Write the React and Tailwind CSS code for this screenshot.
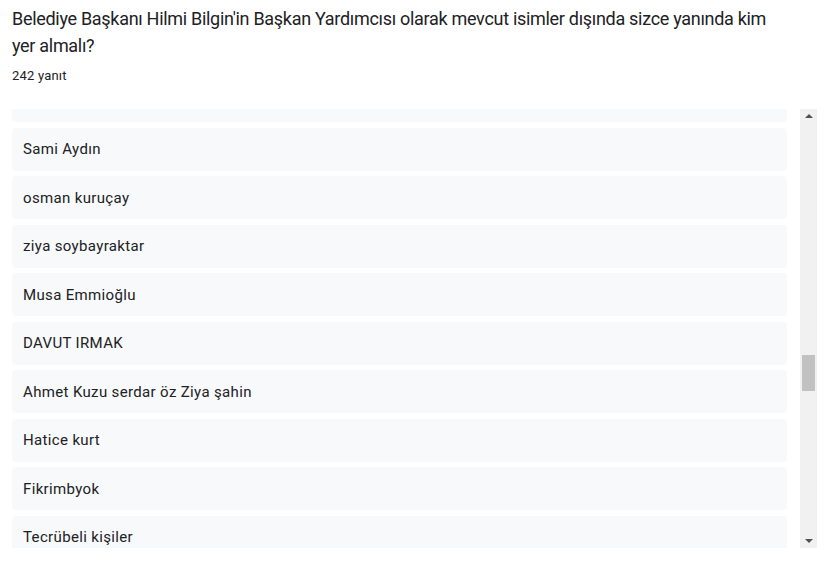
import React from 'react';

const answers = [
  '',
  'Sami Aydın',
  'osman kuruçay',
  'ziya soybayraktar',
  'Musa Emmioğlu',
  'DAVUT IRMAK',
  'Ahmet Kuzu serdar öz Ziya şahin',
  'Hatice kurt',
  'Fikrimbyok',
  'Tecrübeli kişiler',
];

export default function App() {
  return (
    <div className="w-[826px] h-[569px] bg-white overflow-hidden text-[#202124]" style={{ fontFamily: 'Roboto, "Liberation Sans", sans-serif' }}>
      {/* Question header */}
      <div className="pl-[12px] pt-[5px]">
        <h2 className="max-w-[775px] text-[18px] leading-[27px] font-normal tracking-[-0.3px]">
          Belediye Başkanı Hilmi Bilgin'in Başkan Yardımcısı olarak mevcut isimler dışında sizce yanında kim yer almalı?
        </h2>
        <p className="text-[13px] leading-[16px] mt-[9px] tracking-[0.2px]">242 yanıt</p>
      </div>

      {/* Answers list */}
      <div className="flex mt-[25px] h-[439px] pl-[12px]">
        <div className="w-[775px] h-full overflow-hidden">
          <div className="flex flex-col gap-[5.5px] -mt-[30px]">
            {answers.map((a, i) => (
              <div key={i} className="h-[43px] shrink-0 flex items-center pl-[11px] pt-[1px] bg-[#f8f9fa] rounded-[4px] text-[15px] tracking-[0.35px]">
                {a}
              </div>
            ))}
          </div>
        </div>

        {/* Scrollbar */}
        <div className="ml-[13px] w-[17px] h-full bg-[#f1f1f1] flex flex-col items-center justify-between py-[5px]">
          <div className="w-0 h-0 border-l-[4px] border-r-[4px] border-b-[4px] border-l-transparent border-r-transparent border-b-[#505050]" />
          <div className="flex-1 w-full flex flex-col px-[2px]">
            <div className="h-[237px]" />
            <div className="h-[36px] bg-[#c1c1c1]" />
          </div>
          <div className="w-0 h-0 border-l-[4px] border-r-[4px] border-t-[4px] border-l-transparent border-r-transparent border-t-[#505050]" />
        </div>
      </div>
    </div>
  );
}
